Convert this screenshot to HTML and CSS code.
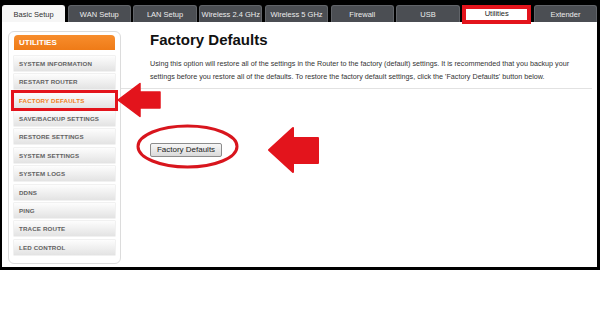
FILE: index.html
```html
<!DOCTYPE html>
<html lang="en">

<head>
    <meta charset="UTF-8">
    <meta name="viewport" content="width=device-width, initial-scale=1.0">
    <title>Factory Defaults</title>
    <link rel="stylesheet" href="styles.css">
</head>

<body>
    <div class="frame">
        <ul class="tabs">
            <li class="tab active">Basic Setup</li>
            <li class="tab">WAN Setup</li>
            <li class="tab">LAN Setup</li>
            <li class="tab">Wireless 2.4 GHz</li>
            <li class="tab">Wireless 5 GHz</li>
            <li class="tab">Firewall</li>
            <li class="tab">USB</li>
            <li class="tab marked">Utilities</li>
            <li class="tab">Extender</li>
        </ul>

        <div class="content">
            <aside class="sidebar">
                <div class="side-head">UTILITIES</div>
                <ul class="side-menu">
                    <li>SYSTEM INFORMATION</li>
                    <li>RESTART ROUTER</li>
                    <li class="current">FACTORY DEFAULTS</li>
                    <li>SAVE/BACKUP SETTINGS</li>
                    <li>RESTORE SETTINGS</li>
                    <li>SYSTEM SETTINGS</li>
                    <li>SYSTEM LOGS</li>
                    <li>DDNS</li>
                    <li>PING</li>
                    <li>TRACE ROUTE</li>
                    <li>LED CONTROL</li>
                </ul>
            </aside>

            <main class="main">
                <div class="page-head">
                    <h1>Factory Defaults</h1>
                    <p class="intro">
                        Using this option will restore all of the settings in the Router to the factory (default)
                        settings. It is recommended that you backup your settings before you restore all of the
                        defaults. To restore the factory default settings, click the 'Factory Defaults' button below.
                    </p>
                </div>
                <div class="page-body">
                    <button type="button" class="reset-button">Factory Defaults</button>
                </div>
            </main>
        </div>

        <!-- red annotation marks drawn over the page -->
        <svg class="marks" width="600" height="270" viewBox="0 0 600 270">
            <polygon points="118,100 140,83.5 140,92 160,92 160,108 140,108 140,116.5" fill="#e3141c"
                stroke="#e3141c" stroke-width="1.5" stroke-linejoin="round" />
            <ellipse cx="187.5" cy="146.5" rx="49.5" ry="20.5" fill="none" stroke="#d8151d" stroke-width="3" />
            <polygon points="269,150 293,128 293,138 318,138 318,163 293,163 293,172" fill="#e3141c"
                stroke="#e3141c" stroke-width="2" stroke-linejoin="round" />
        </svg>
    </div>
</body>

</html>
```

FILE: styles.css
```css
body {
    margin: 0;
    background-color: #fff;
    font-family: "Liberation Sans", Arial, sans-serif;
}

.frame {
    position: relative;
    width: 600px;
    height: 269.5px;
    box-sizing: border-box;
    padding: 5px 3px 2.5px 2px;
    background-color: #000;
    display: flex;
    flex-direction: column;
}

/* top tabs */
.tabs {
    display: flex;
    align-items: flex-start;
    gap: 2.6px;
    height: 17px;
    margin: 0;
    padding: 0;
    list-style: none;
}

.tab {
    flex: 1;
    height: 17px;
    box-sizing: border-box;
    background-color: #4b4e53;
    border: 1px solid #616469;
    border-bottom: none;
    border-radius: 3px 3px 0 0;
    color: #ececec;
    font-size: 7.5px;
    line-height: 17px;
    text-align: center;
}

.tab.active {
    background-color: #f6f6f6;
    border-color: #f6f6f6;
    color: #333;
}

.tab.marked {
    position: relative;
    z-index: 1;
    height: 18.5px;
    background-color: #fff;
    border: 4.5px solid #e3141c;
    border-radius: 0;
    color: #222;
    line-height: 9.5px;
}

.content {
    flex: 1;
    display: flex;
    align-items: flex-start;
    padding: 9px 5px 0 6px;
    background-color: #fff;
}

/* left menu */
.sidebar {
    width: 113px;
    height: 233px;
    box-sizing: border-box;
    padding: 3px 5px;
    border: 1px solid #dcdcdc;
    border-radius: 6px;
}

.side-head {
    height: 15px;
    padding-left: 5px;
    background: linear-gradient(#f78d2d, #ef7b17);
    border-radius: 4px 4px 0 0;
    color: #fff;
    font-size: 8px;
    font-weight: bold;
    line-height: 15px;
}

.side-menu {
    margin: 5.8px 0 0;
    padding: 0;
    list-style: none;
}

.side-menu li {
    height: 15px;
    margin-bottom: 3.4px;
    padding-left: 5px;
    background: linear-gradient(#fdfdfd, #e3e3e3);
    box-shadow: 0 0 0 0.5px #e2e2e2;
    color: #626262;
    font-size: 6.2px;
    font-weight: bold;
    letter-spacing: 0.15px;
    line-height: 15px;
}

.side-menu li.current {
    color: #f07f22;
    outline: 3px solid #e3141c;
}

/* main panel */
.main {
    flex: 1;
}

.page-head {
    padding: 0 0 4.5px 29px;
    border-bottom: 1px solid #e2e2e2;
}

h1 {
    margin: 0;
    color: #111;
    font-size: 15px;
    line-height: 18px;
}

.intro {
    max-width: 432px;
    margin: 7.5px 0 0;
    color: #333;
    font-size: 7.2px;
    line-height: 13.5px;
}

.page-body {
    padding-left: 29px;
}

.reset-button {
    display: block;
    width: 72px;
    height: 14px;
    margin-top: 53.5px;
    padding: 0;
    background: linear-gradient(#f7f7f7, #dadada);
    border: 1px solid #8c8c8c;
    border-radius: 2px;
    color: #222;
    font-family: "Liberation Sans", Arial, sans-serif;
    font-size: 8px;
    line-height: 12px;
}

.marks {
    position: absolute;
    left: 0;
    top: 0;
    pointer-events: none;
}
```
